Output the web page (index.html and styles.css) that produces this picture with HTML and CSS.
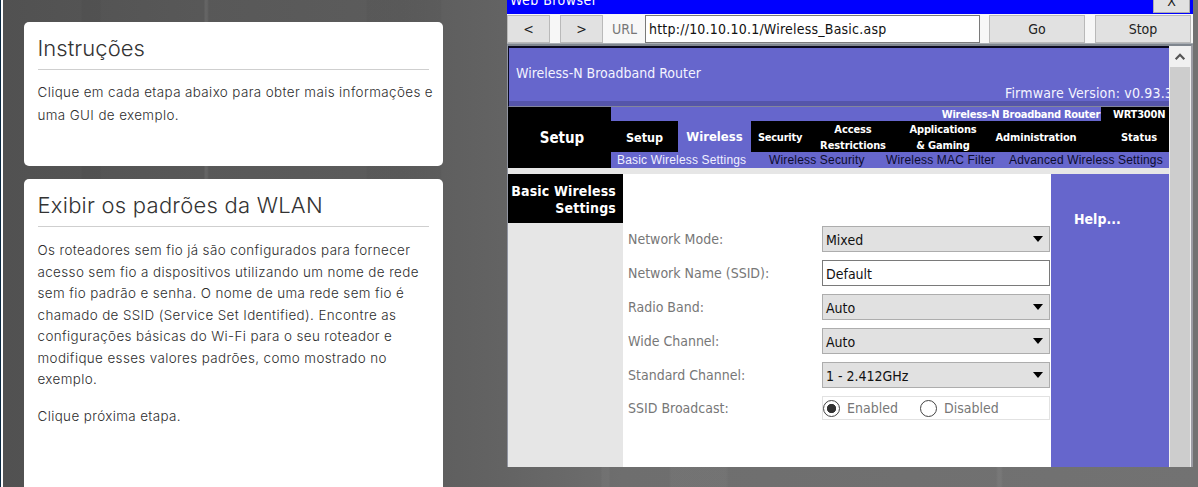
FILE: index.html
```
<!DOCTYPE html>
<html lang="pt">
<head>
<meta charset="utf-8">
<title>Instruções</title>
<link rel="stylesheet" href="styles.css">
</head>
<body>
<div class="stage">
  <main class="cards">
    <section class="card card-intro">
      <h1 class="card-title t1">Instruções</h1>
      <p class="copy copy-intro">Clique em cada etapa abaixo para obter mais informações e<br>uma GUI de exemplo.</p>
    </section>
    <section class="card card-step">
      <h1 class="card-title t2">Exibir os padrões da WLAN</h1>
      <p class="copy">Os roteadores sem fio já são configurados para fornecer<br>acesso sem fio a dispositivos utilizando um nome de rede<br>sem fio padrão e senha. O nome de uma rede sem fio é<br>chamado de SSID (Service Set Identified). Encontre as<br>configurações básicas do Wi-Fi para o seu roteador e<br>modifique esses valores padrões, como mostrado no<br>exemplo.</p>
      <p class="copy">Clique próxima etapa.</p>
    </section>
  </main>

  <div class="window">
    <header class="titlebar"><span class="win-title">Web Browser</span><button class="close">X</button></header>
    <div class="toolbar">
      <button class="btn nav">&lt;</button>
      <button class="btn nav">&gt;</button>
      <span class="url-label">URL</span>
      <div class="url">http://10.10.10.1/Wireless_Basic.asp</div>
      <button class="btn go">Go</button>
      <button class="btn go">Stop</button>
    </div>
    <div class="viewport">
      <div class="page">
        <div class="banner">
          <span class="product">Wireless-N Broadband Router</span>
          <span class="firmware">Firmware Version: v0.93.3</span>
        </div>
        <div class="menu">
          <div class="section-name">Setup</div>
          <div class="menu-main">
            <div class="model-row"><span class="model-name">Wireless-N Broadband Router</span><span class="model">WRT300N</span></div>
            <nav class="tabs">
              <span class="tab tab-setup">Setup</span>
              <span class="tab tab-active">Wireless</span>
              <span class="tab tab-security">Security</span>
              <span class="tab tab-access">Access<br>Restrictions</span>
              <span class="tab tab-apps">Applications<br>&amp; Gaming</span>
              <span class="tab tab-admin">Administration</span>
              <span class="tab tab-status">Status</span>
            </nav>
            <nav class="subtabs">
              <span class="sub sub-active">Basic Wireless Settings</span>
              <span class="sub sub-sec">Wireless Security</span>
              <span class="sub sub-mac">Wireless MAC Filter</span>
              <span class="sub sub-adv">Advanced Wireless Settings</span>
            </nav>
          </div>
        </div>
        <div class="content">
          <aside class="side"><div class="side-title">Basic Wireless<br>Settings</div></aside>
          <div class="form">
            <div class="row"><span class="label">Network Mode:</span><div class="field select">Mixed</div></div>
            <div class="row"><span class="label">Network Name (SSID):</span><div class="field input">Default</div></div>
            <div class="row"><span class="label">Radio Band:</span><div class="field select">Auto</div></div>
            <div class="row"><span class="label">Wide Channel:</span><div class="field select">Auto</div></div>
            <div class="row"><span class="label">Standard Channel:</span><div class="field select">1 - 2.412GHz</div></div>
            <div class="row row-radio"><span class="label">SSID Broadcast:</span>
              <div class="radios">
                <span class="radio radio-on"></span><span class="radio-text enabled">Enabled</span>
                <span class="radio"></span><span class="radio-text">Disabled</span>
              </div>
            </div>
          </div>
          <aside class="help">Help...</aside>
        </div>
      </div>
      <div class="scrollbar">
        <div class="arrow"><svg width="12" height="9" viewBox="0 0 12 9"><path d="M1.7 7.2 6 2.8l4.3 4.4" fill="none" stroke="#555" stroke-width="2.2"/></svg></div>
      </div>
    </div>
  </div>
</div>
</body>
</html>
```
FILE: styles.css
```
* { box-sizing: border-box; }

body {
  margin: 0;
  width: 1198px;
  height: 487px;
  overflow: hidden;
  font-family: "DejaVu Sans Condensed", "DejaVu Sans", sans-serif;
  font-stretch: condensed;
  font-size: 14px;
  white-space: nowrap;
}

.stage {
  display: flex;
  height: 487px;
  overflow: hidden;
  border-left: 1px solid #0c2a42;
  background:
    linear-gradient(90deg, #fff 2px, transparent 2px),
    linear-gradient(90deg, transparent 600px, rgba(255, 255, 255, .035) 601px 608px, transparent 609px 668px, rgba(255, 255, 255, .03) 670px 725px, transparent 728px 995px, rgba(255, 255, 255, .05) 997px 1000px, transparent 1002px) 0 467px no-repeat,
    linear-gradient(90deg, transparent 80px, rgba(0, 0, 0, .04) 81px 99px, transparent 100px 203px, rgba(255, 255, 255, .07) 204px 206px, transparent 208px 365px, rgba(0, 0, 0, .03) 366px 440px, transparent 441px) 0 0 / 100% 179px no-repeat,
    linear-gradient(90deg, #515151 0, #585858 200px, #5c5c5c 400px, #636363 500px, #6e6e6e 620px, #727272 100%);
}

.cards {
  display: flex;
  flex-direction: column;
  gap: 13px;
  flex: none;
  width: 442px;
  padding: 22px 0 0 22.5px;
}

.card {
  flex: none;
  width: 419px;
  padding: 0 14px;
  border-radius: 5px;
  background: #fff;
}

.card-intro { height: 144px; }
.card-step { height: 330px; }

.card-title {
  margin: 0 0 13px;
  height: 48px;
  border-bottom: 1px solid #cfcfcf;
  font: 300 22px/53px Inter, sans-serif;
  color: #333;
}

.t1 { letter-spacing: .05px; }
.t2 { letter-spacing: .24px; }

.copy {
  margin: 0 0 15.4px;
  font: 300 13.4px/21.5px Inter, sans-serif;
  letter-spacing: .39px;
  color: #2e2e2e;
}

.copy-intro { line-height: 23px; margin-top: -2px; }

.window {
  display: flex;
  flex-direction: column;
  flex: none;
  width: 686px;
  height: 467px;
  margin-left: 64px;
  background: #f7f7f7;
  overflow: hidden;
}

.titlebar {
  display: flex;
  justify-content: space-between;
  flex: none;
  height: 14px;
  padding: 0 3px 0 3px;
  background: #00f;
  color: #fff;
}

.win-title { margin-top: -9px; height: 20px; line-height: 19px; letter-spacing: .45px; }

.close {
  width: 37px;
  height: 23px;
  margin-top: -10px;
  padding: 0;
  border: 1px solid #adadad;
  background: #e1e1e1;
  font: 14px/21px "DejaVu Sans Condensed", sans-serif;
  color: #222;
}

.toolbar {
  display: flex;
  flex: none;
  height: 30px;
  padding-top: 1px;
  border-bottom: 1px solid #a8adb3;
}

.btn {
  flex: none;
  height: 28px;
  padding: 0;
  border: 1px solid #b9b9b9;
  background: #e1e1e1;
  font: 14px/26px "DejaVu Sans Condensed", sans-serif;
  color: #222;
}

.nav { width: 43px; margin-right: 10px; }
.go { width: 96px; margin-left: 9px; }
.go + .go { margin-left: 10px; }

.url-label { flex: none; width: 32px; text-indent: -1px; line-height: 29px; color: #777; }

.url {
  flex: none;
  width: 335px;
  height: 28px;
  padding-left: 3px;
  border: 1px solid #7a7a7a;
  background: #fff;
  line-height: 27px;
  letter-spacing: .22px;
  color: #111;
}

.viewport {
  display: flex;
  flex: 1;
  border-top: 2px solid #7f868e;
  border-left: 1px solid #9094a0;
  border-right: 2px solid #9c9ca4;
}

.page { flex: none; width: 661px; overflow: hidden; }

.banner {
  display: flex;
  justify-content: space-between;
  height: 61px;
  overflow: hidden;
  border-top: 2px solid #0a0a20;
  border-left: 1px solid #0a0a20;
  border-bottom: 1px solid #83869c;
  background: linear-gradient(#66c 53px, #55a 53px);
  color: #f4f4ff;
}

.product { padding: 16px 0 0 7px; line-height: 18px; }
.firmware { width: 164px; padding-top: 36px; line-height: 18px; letter-spacing: .18px; }

.menu { display: flex; height: 61px; background: #66c; color: #fff; font-weight: 700; }

.section-name {
  flex: none;
  width: 103px;
  padding-left: 5px;
  background: #000;
  font-size: 15px;
  line-height: 62px;
  text-align: center;
}

.menu-main { flex: none; width: 558px; }

.model-row { display: flex; justify-content: flex-end; height: 14px; font-size: 11px; line-height: 15px; }
.model-name { margin-right: 1px; letter-spacing: -.28px; }
.model { width: 68px; padding-left: 12px; background: #000; letter-spacing: -.22px; }

.tabs { display: flex; height: 31px; background: #000; font-size: 11px; }
.tab { flex: none; line-height: 33px; text-align: center; }
.tab-setup { width: 67px; font-size: 12.5px; }
.tab-active { width: 73px; background: #66c; font-size: 13px; line-height: 31px; }
.tab-security { width: 58px; letter-spacing: -.25px; }
.tab-access { width: 88px; padding-top: 1px; line-height: 15.5px; letter-spacing: -.1px; }
.tab-apps { width: 92px; padding-top: 1px; line-height: 15.5px; letter-spacing: -.17px; }
.tab-admin { width: 94px; letter-spacing: -.15px; }
.tab-status { width: 60px; margin-left: auto; }

.subtabs {
  display: flex;
  height: 16px;
  padding-left: 6px;
  font: 400 12px/17px "Liberation Sans", sans-serif;
  letter-spacing: .17px;
  color: #0c0c2c;
}
.sub-active { width: 152px; color: #f0f0ff; }
.sub-sec { width: 117px; }
.sub-mac { width: 123px; }

.content {
  display: flex;
  height: 299px;
  border-top: 6px solid #e6e6e6;
  background: #fff;
}

.side { flex: none; width: 115px; background: #e6e6e6; }
.side-title {
  height: 49px;
  padding: 9px 7px 0 0;
  background: #000;
  color: #fff;
  font-weight: 700;
  line-height: 17px;
  text-align: right;
  letter-spacing: .15px;
}

.form {
  display: flex;
  flex-direction: column;
  gap: 8px;
  flex: none;
  width: 428px;
  padding: 52px 1px 0 5px;
}

.row { display: flex; justify-content: space-between; }
.label { line-height: 26px; color: #777; }

.field {
  width: 228px;
  height: 26px;
  padding-left: 3px;
  border: 1px solid #adadad;
  line-height: 26px;
  color: #111;
}
.select {
  display: flex;
  justify-content: space-between;
  align-items: flex-start;
  padding-right: 6px;
  background: #e1e1e1;
}
.select::after {
  content: "";
  margin-top: 9px;
  border: 5px solid transparent;
  border-top: 6px solid #000;
  border-bottom: 0;
}
.input { border-color: #7a7a7a; background: #fff; }

.row-radio .label { line-height: 24px; }
.radios {
  display: flex;
  align-items: center;
  width: 228px;
  height: 24px;
  border: 1px solid #e2e2e2;
  color: #777;
}
.radio {
  width: 17px;
  height: 17px;
  margin-right: 7px;
  border: 1.5px solid #444;
  border-radius: 50%;
  background: #fff;
}
.radio-on { background: radial-gradient(circle, #333 4.3px, #fff 5px); }
.enabled { width: 73px; }

.help {
  width: 118px;
  padding: 33px 0 0 23px;
  background: #66c;
  color: #fff;
  font-weight: 700;
  line-height: 24px;
}

.scrollbar {
  width: 22px;
  border-left: 1px solid #f0f0f0;
  border-right: 1px solid #eee;
  background: #cdcdcd;
}
.arrow { height: 21px; padding: 6px 0 0 4px; background: #f0f0f0; line-height: 0; }
```
